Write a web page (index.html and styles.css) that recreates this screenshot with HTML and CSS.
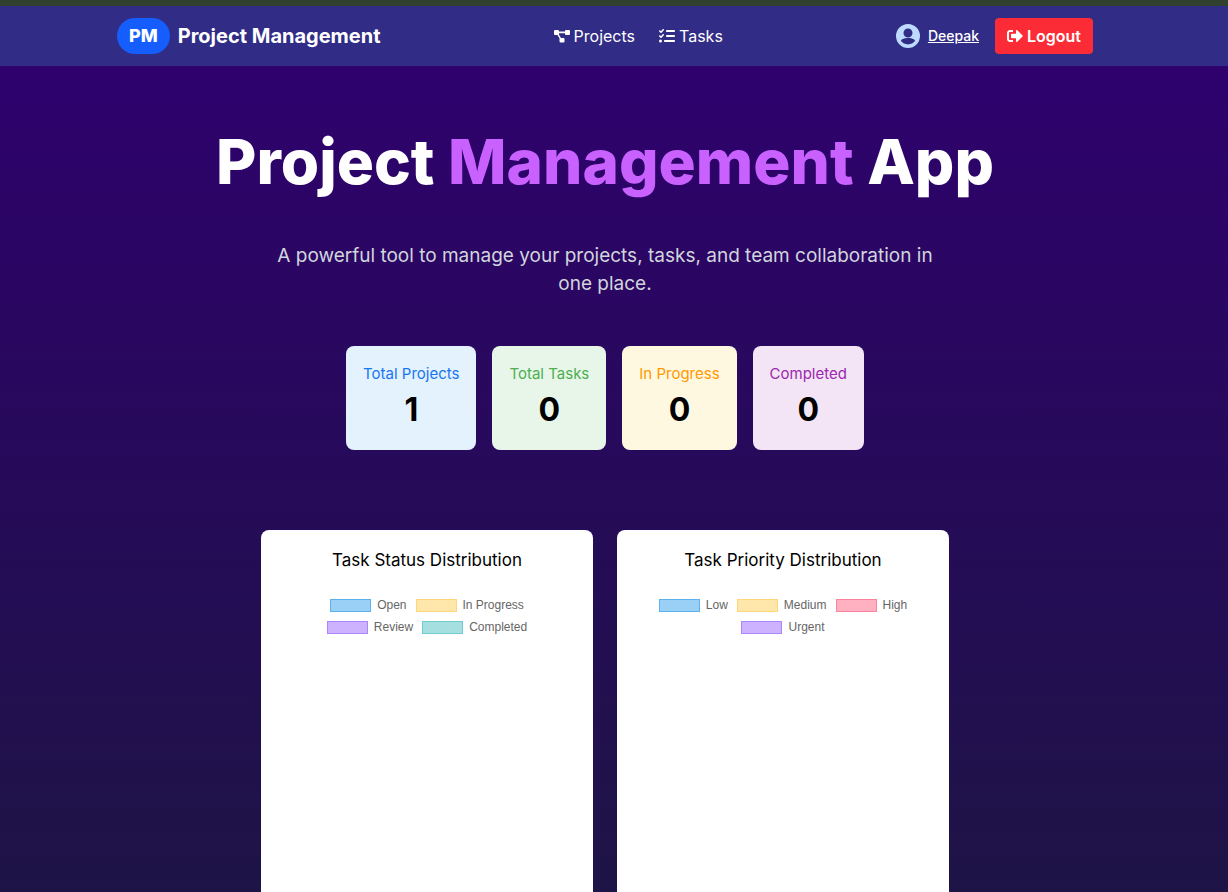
FILE: index.html
```html
<!DOCTYPE html>
<html lang="en">
<head>
<meta charset="utf-8">
<meta name="viewport" content="width=device-width, initial-scale=1">
<title>Project Management</title>
<link rel="stylesheet" href="styles.css">
</head>
<body>
<header class="site-header">
  <div class="header-inner">
    <div class="brand">
      <span class="brand-badge">PM</span>
      <span class="brand-name">Project Management</span>
    </div>
    <nav class="nav">
      <a class="nav-link" href="#projects">
        <svg class="icon" viewBox="0 0 16 16" aria-hidden="true"><path d="M1 2h3a1 1 0 0 1 1 1v.6h6V3a1 1 0 0 1 1-1h3a1 1 0 0 1 1 1v3a1 1 0 0 1-1 1h-3a1 1 0 0 1-1-1v-.8H5V6l-.1.400L7 10h2.500a1 1 0 0 1 1 1v2.500a1 1 0 0 1-1 1h-3a1 1 0 0 1-1-1V11l.1-.4L3.500 7H1a1 1 0 0 1-1-1V3a1 1 0 0 1 1-1z"/></svg>
        Projects
      </a>
      <a class="nav-link" href="#tasks">
        <svg class="icon" viewBox="0 0 512 512" aria-hidden="true"><path d="M152 38c10 9 11 24 2 34l-72 80c-4 5-11 8-17 8s-13-2-18-7L7 113c-9-9-9-24 0-34s25-9 34 0l22 22 55-61c9-10 24-11 34-2zm0 160c10 9 11 24 2 34l-72 80c-4 5-11 8-17 8s-13-2-18-7L7 273c-9-9-9-24 0-34s25-9 34 0l22 22 55-61c9-10 24-11 34-2zM224 96c0-18 14-32 32-32h224c18 0 32 14 32 32s-14 32-32 32H256c-18 0-32-14-32-32zm0 160c0-18 14-32 32-32h224c18 0 32 14 32 32s-14 32-32 32H256c-18 0-32-14-32-32zm-64 160c0-18 14-32 32-32h288c18 0 32 14 32 32s-14 32-32 32H192c-18 0-32-14-32-32zM48 368a48 48 0 1 1 0 96 48 48 0 1 1 0-96z"/></svg>
        Tasks
      </a>
    </nav>
    <div class="account">
      <a class="user" href="#profile">
        <svg class="avatar" viewBox="0 0 24 24" aria-hidden="true"><path fill-rule="evenodd" d="M12 0a12 12 0 1 0 0 24 12 12 0 0 0 0-24zm0 4.500a4.500 4.500 0 1 1 0 9 4.500 4.500 0 0 1 0-9zm0 15.900c-3 0-5.500-1.300-7-3.300.1-2.300 4.700-3 7-3s6.900.7 7 3c-1.500 2-4 3.300-7 3.300z"/></svg>
        <span class="user-name">Deepak</span>
      </a>
      <button class="logout" type="button">
        <svg class="icon" viewBox="0 0 512 512" aria-hidden="true"><path d="M497 273 329 441c-15 15-41 4.500-41-17v-96H152c-13.300 0-24-10.700-24-24v-96c0-13.300 10.700-24 24-24h136V88c0-21.400 25.900-32 41-17l168 168c9.300 9.400 9.300 24.600 0 34zM192 436v-40c0-6.600-5.400-12-12-12H96c-17.700 0-32-14.300-32-32V160c0-17.700 14.300-32 32-32h84c6.600 0 12-5.400 12-12V76c0-6.600-5.400-12-12-12H96c-53 0-96 43-96 96v192c0 53 43 96 96 96h84c6.600 0 12-5.400 12-12z"/></svg>
        Logout
      </button>
    </div>
  </div>
</header>
<main class="hero">
  <h1 class="title">Project <span class="accent">Management</span> App</h1>
  <p class="lead">A powerful tool to manage your projects, tasks, and team collaboration in one place.</p>
  <section class="stats" aria-label="Summary">
    <div class="stat stat-projects"><h2 class="stat-label">Total Projects</h2><p class="stat-value">1</p></div>
    <div class="stat stat-tasks"><h2 class="stat-label">Total Tasks</h2><p class="stat-value">0</p></div>
    <div class="stat stat-progress"><h2 class="stat-label">In Progress</h2><p class="stat-value">0</p></div>
    <div class="stat stat-completed"><h2 class="stat-label">Completed</h2><p class="stat-value">0</p></div>
  </section>
  <section class="charts" aria-label="Charts">
    <article class="chart">
      <h2 class="chart-title">Task Status Distribution</h2>
      <ul class="legend">
        <li class="legend-item"><span class="swatch blue"></span>Open</li>
        <li class="legend-item"><span class="swatch yellow"></span>In Progress</li>
        <li class="legend-item"><span class="swatch purple"></span>Review</li>
        <li class="legend-item"><span class="swatch teal"></span>Completed</li>
      </ul>
    </article>
    <article class="chart">
      <h2 class="chart-title">Task Priority Distribution</h2>
      <ul class="legend">
        <li class="legend-item"><span class="swatch blue"></span>Low</li>
        <li class="legend-item"><span class="swatch yellow"></span>Medium</li>
        <li class="legend-item"><span class="swatch red"></span>High</li>
        <li class="legend-item"><span class="swatch purple"></span>Urgent</li>
      </ul>
    </article>
  </section>
</main>
</body>
</html>
```

FILE: styles.css
```css
* {
  box-sizing: border-box;
  margin: 0;
}

body {
  display: flex;
  flex-direction: column;
  min-height: 100vh;
  font-family: Inter, "Liberation Sans", sans-serif;
  font-size: 16px;
  line-height: 24px;
  color: #fff;
  background: linear-gradient(to bottom, #300070, #1e1446);
}

a {
  color: inherit;
  text-decoration: none;
}

.site-header {
  padding: 12px 18px 12px 0;
  border-top: 6px solid #30412f;
  background: #312c85;
}

.header-inner {
  display: flex;
  align-items: center;
  justify-content: space-between;
  max-width: 1024px;
  margin: 0 auto;
  padding: 0 24px;
}

.brand,
.nav,
.account,
.user,
.nav-link,
.logout {
  display: flex;
  align-items: center;
}

.brand {
  gap: 8px;
  font-weight: 700;
}

.brand-badge {
  padding: 4px 12px;
  border-radius: 18px;
  font-size: 18px;
  font-weight: 800;
  line-height: 28px;
  background: #155dfc;
}

.brand-name {
  font-size: 20px;
  line-height: 28px;
  white-space: nowrap;
}

.nav {
  gap: 24px;
}

.nav-link {
  gap: 4px;
}

.icon {
  width: 16px;
  height: 16px;
  fill: currentColor;
}

.account {
  gap: 16px;
}

.user {
  gap: 8px;
}

.avatar {
  width: 24px;
  height: 24px;
  fill: #bedbff;
}

.user-name {
  font-size: 14px;
  font-weight: 500;
  text-decoration: underline;
}

.logout {
  gap: 4px;
  padding: 6px 12px;
  border: 0;
  border-radius: 4px;
  font: inherit;
  font-weight: 600;
  color: #fff;
  background: #fb2c36;
}

.hero {
  flex: 1;
  display: flex;
  flex-direction: column;
  align-items: center;
  padding: 64px 18px 0 0;
}

.title {
  font-size: 62px;
  font-weight: 800;
  line-height: 64px;
}

.accent {
  color: #c961ff;
}

.lead {
  max-width: 672px;
  margin-top: 48px;
  font-size: 19px;
  line-height: 28px;
  text-align: center;
  color: #d1d5dc;
}

.stats {
  display: flex;
  gap: 16px;
  margin-top: 48px;
}

.stat {
  padding: 16px 17px;
  border-radius: 8px;
  text-align: center;
}

.stat-label {
  font-size: 15px;
  font-weight: 400;
  line-height: 24px;
}

.stat-value {
  font-size: 32px;
  font-weight: 700;
  line-height: 48px;
  color: #000;
}

.stat-projects {
  color: #1976f2;
  background: #e3f2fd;
}

.stat-tasks {
  color: #4caf50;
  background: #e8f5e9;
}

.stat-progress {
  color: #ff9800;
  background: #fff8e1;
}

.stat-completed {
  color: #9c27b0;
  background: #f3e5f5;
}

.charts {
  flex: 1;
  display: grid;
  grid-template-columns: 1fr 1fr;
  gap: 24px;
  width: 100%;
  max-width: 688px;
  margin-top: 80px;
}

.chart {
  padding: 16px;
  border-radius: 8px 8px 0 0;
  color: #000;
  background: #fff;
}

.chart-title {
  font-size: 17px;
  font-weight: 400;
  line-height: 28px;
  text-align: center;
}

.legend {
  display: flex;
  flex-wrap: wrap;
  justify-content: center;
  gap: 0 9px;
  margin-top: 20px;
  padding: 0 16px;
  list-style: none;
  font-family: "Liberation Sans", Arial, sans-serif;
  font-size: 12px;
  line-height: 22px;
  color: #666;
}

.legend-item {
  display: flex;
  align-items: center;
  gap: 6px;
}

.swatch {
  width: 41px;
  height: 13px;
  border: 1px solid;
}

.blue {
  border-color: #5bb2ee;
  background: #9ad0f5;
}

.yellow {
  border-color: #ffd778;
  background: #ffe6aa;
}

.purple {
  border-color: #ad85ff;
  background: #ccb2ff;
}

.teal {
  border-color: #6fcdcd;
  background: #a5dfdf;
}

.red {
  border-color: #ff829d;
  background: #ffb1c1;
}
```
